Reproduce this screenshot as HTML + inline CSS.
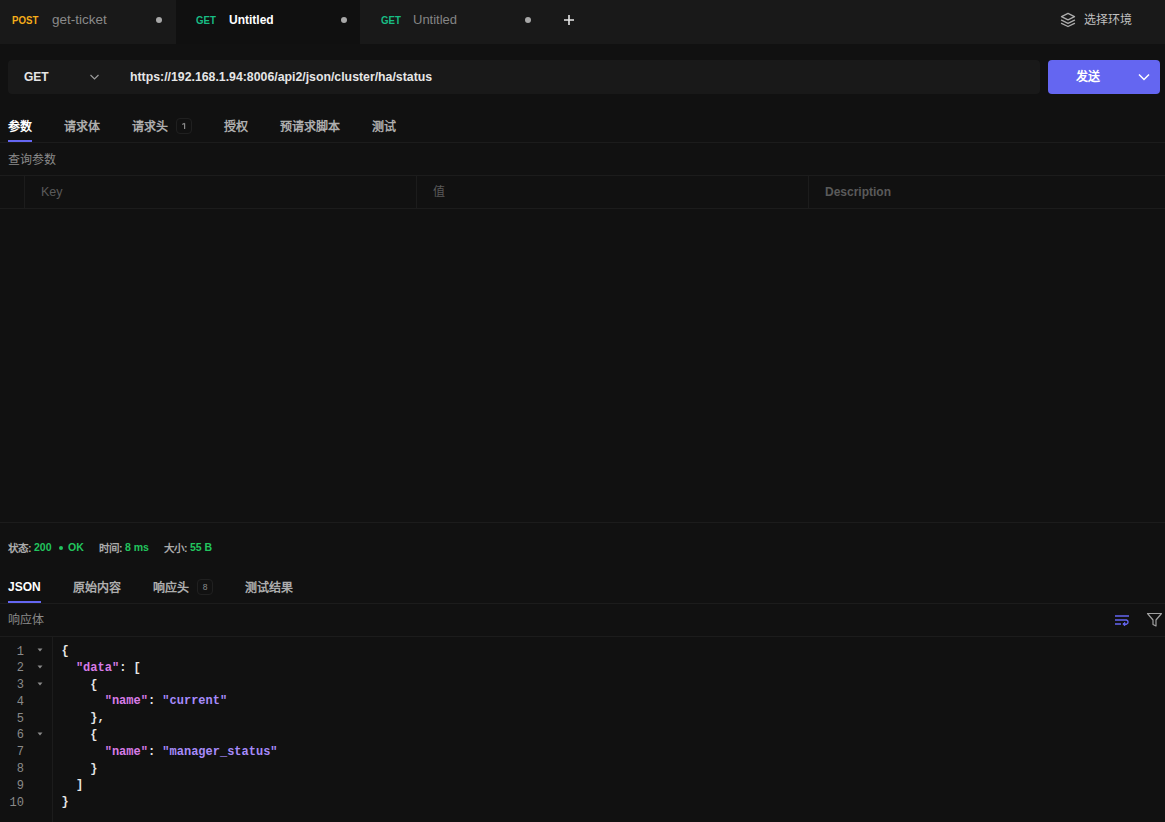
<!DOCTYPE html>
<html lang="zh-CN"><head><meta charset="utf-8">
<style>
*{margin:0;padding:0;box-sizing:border-box}
html,body{width:1165px;height:822px;overflow:hidden;background:#111111;font-family:"Liberation Sans",sans-serif;position:relative}
.a{position:absolute;white-space:nowrap}
.tabbar{left:0;top:0;width:1165px;height:44px;background:#191919}
.tab{top:0;height:44px}
.m{font-size:10.5px;font-weight:bold;top:14px;line-height:12px;transform:scaleX(0.92);transform-origin:0 0}
.tt{font-size:13px;top:11.5px;line-height:16px}
.dot{width:6px;height:6px;border-radius:50%;background:#a8a8a8;top:17px}
.hline{left:0;width:1165px;height:1px;background:#1c1c1c}
.vline{width:1px;background:#1c1c1c}
.rt{font-size:12px;font-weight:bold;color:#adadad;line-height:14px}
.badge{width:16px;height:16px;border:1px solid #202020;border-radius:4px;font-size:8.5px;color:#8a8a8a;text-align:center;line-height:14px}
.ln{font-family:"Liberation Mono",monospace;font-size:12px;color:#8a8a8a;line-height:16.8px;text-align:right;width:16px;left:8px}
.code{font-family:"Liberation Mono",monospace;font-size:12px;color:#e6e6e6;line-height:16.8px;left:61.5px;white-space:pre;font-weight:bold}
.st{top:541.5px;font-size:10.5px;line-height:13px;color:#aaaaaa;font-weight:bold}
.sv{top:540.8px;font-size:10.5px;line-height:13px;color:#22c55e;font-weight:bold}
.k{color:#d77be6}.s{color:#a78bfa}
</style></head><body>
<div class="a tabbar"></div>
<!-- tab1 -->
<div class="a tab" style="left:176px;width:184px;background:#101010"></div>
<div class="a m" style="left:12px;color:#f5ad1a">POST</div>
<div class="a tt" style="left:52px;color:#8a8a8a;font-size:13.5px">get-ticket</div>
<div class="a dot" style="left:156px"></div>
<div class="a m" style="left:196px;color:#18bd84">GET</div>
<div class="a tt" style="left:229px;color:#ffffff;font-weight:bold;font-size:12.5px;transform:scaleX(0.96);transform-origin:0 0">Untitled</div>
<div class="a dot" style="left:341px"></div>
<div class="a m" style="left:381px;color:#18bd84">GET</div>
<div class="a tt" style="left:413px;color:#858585;font-size:13px">Untitled</div>
<div class="a dot" style="left:525px"></div>
<svg class="a" style="left:563px;top:14px" width="12" height="12" viewBox="0 0 12 12"><path d="M6 1V11M1 6H11" stroke="#e6e6e6" stroke-width="1.6"/></svg>
<svg class="a" style="left:1060px;top:12px" width="17" height="17" viewBox="0 0 17 17" fill="none" stroke="#acacac" stroke-width="1.3" stroke-linejoin="round" stroke-linecap="round"><path d="M1.5 4.6L8 1.3L14.5 4.6L8 7.9Z"/><path d="M1.5 8.2L8 11.3L14.5 8.2"/><path d="M1.5 11.4L8 14.5L14.5 11.4"/></svg>
<div class="a" style="left:1084px;top:12px;font-size:12px;line-height:16px;color:#c0c0c0;font-weight:500">选择环境</div>

<!-- url row -->
<div class="a" style="left:8px;top:60px;width:1032px;height:34px;background:#191919;border-radius:4px"></div>
<div class="a" style="left:24px;top:69px;font-size:12px;font-weight:bold;color:#e6e6e6;line-height:16px">GET</div>
<svg class="a" style="left:89px;top:73px" width="11" height="8" viewBox="0 0 11 8"><path d="M1.5 2L5.5 6L9.5 2" fill="none" stroke="#9a9a9a" stroke-width="1.2"/></svg>
<div class="a" style="left:130px;top:69px;font-size:12.3px;font-weight:bold;color:#e6e6e6;line-height:16px">https://192.168.1.94:8006/api2/json/cluster/ha/status</div>
<div class="a" style="left:1048px;top:60px;width:112px;height:34px;background:#6466f1;border-radius:4px"></div>
<div class="a" style="left:1076px;top:69px;font-size:12px;font-weight:bold;color:#ffffff;line-height:16px">发送</div>
<svg class="a" style="left:1137px;top:72px" width="14" height="10" viewBox="0 0 14 10"><path d="M2 2.5L7 7.5L12 2.5" fill="none" stroke="#ffffff" stroke-width="1.5"/></svg>

<!-- request tabs -->
<div class="a rt" style="left:8px;top:119.5px;color:#ffffff">参数</div>
<div class="a" style="left:8px;top:140px;width:24px;height:2px;background:#6466f1"></div>
<div class="a rt" style="left:64px;top:119.5px">请求体</div>
<div class="a rt" style="left:132px;top:119.5px">请求头</div>
<div class="a badge" style="left:176px;top:118px"></div>
<svg class="a" style="left:180px;top:121px" width="8" height="10" viewBox="0 0 8 10"><path d="M4.6 2.2V8.1M2.3 3.6L4.6 2.2" fill="none" stroke="#8a8a8a" stroke-width="1.2"/></svg>
<div class="a rt" style="left:224px;top:119.5px">授权</div>
<div class="a rt" style="left:280px;top:119.5px">预请求脚本</div>
<div class="a rt" style="left:372px;top:119.5px">测试</div>
<div class="a hline" style="top:142px"></div>
<div class="a" style="left:8px;top:152.5px;font-size:12px;line-height:14px;color:#8a8a8a">查询参数</div>
<div class="a hline" style="top:175px"></div>
<div class="a hline" style="top:208px"></div>
<div class="a vline" style="left:24px;top:175px;height:33px"></div>
<div class="a vline" style="left:416px;top:175px;height:33px"></div>
<div class="a vline" style="left:808px;top:175px;height:33px"></div>
<div class="a" style="left:41px;top:184px;font-size:12.5px;line-height:16px;color:#5a5a5a">Key</div>
<div class="a" style="left:433px;top:183.5px;font-size:12px;line-height:16px;color:#5a5a5a">值</div>
<div class="a" style="left:825px;top:183.5px;font-size:12px;font-weight:bold;line-height:16px;color:#5a5a5a">Description</div>

<!-- response -->
<div class="a hline" style="top:522px"></div>
<div class="a st" style="left:8px">状态:</div>
<div class="a sv" style="left:34px">200</div>
<div class="a" style="left:59px;top:546px;width:4px;height:4px;border-radius:50%;background:#22c55e"></div>
<div class="a sv" style="left:68px">OK</div>
<div class="a st" style="left:99px">时间:</div>
<div class="a sv" style="left:125px">8 ms</div>
<div class="a st" style="left:164px">大小:</div>
<div class="a sv" style="left:190px">55 B</div>

<div class="a rt" style="left:8px;top:580px;color:#ffffff">JSON</div>
<div class="a" style="left:8px;top:601px;width:33px;height:2px;background:#6466f1"></div>
<div class="a rt" style="left:73px;top:580.5px">原始内容</div>
<div class="a rt" style="left:153px;top:580.5px">响应头</div>
<div class="a badge" style="left:197px;top:579px">8</div>
<div class="a rt" style="left:245px;top:580.5px">测试结果</div>
<div class="a hline" style="top:603px"></div>
<div class="a" style="left:8px;top:613px;font-size:12px;line-height:14px;color:#8a8a8a">响应体</div>
<svg class="a" style="left:1114px;top:613px" width="17" height="14" viewBox="0 0 17 14" fill="none" stroke="#6466f1" stroke-width="1.4"><path d="M1 3H15M1 7H12.5A2.2 2.2 0 0 1 12.5 11.2H10M1 11H7"/><path d="M10.8 9.4L8.8 11.1L10.8 12.8Z" fill="#6466f1" stroke-width="1"/></svg>
<svg class="a" style="left:1146px;top:612px" width="17" height="16" viewBox="0 0 17 16" fill="none" stroke="#a0a0a0" stroke-width="1.2" stroke-linejoin="round"><path d="M1.5 1.5H15.5L10 8V14L7 12.5V8Z"/></svg>
<div class="a hline" style="top:636px"></div>
<div class="a vline" style="left:52px;top:636px;height:186px"></div>
<div class="a ln" style="top:643.5px">1<br>2<br>3<br>4<br>5<br>6<br>7<br>8<br>9<br>10</div>
<svg class="a" style="left:37px;top:648.0px" width="6" height="4" viewBox="0 0 6 4"><path d="M0.5 0.5H5.5L3 3.5Z" fill="#8a8a8a"/></svg>
<svg class="a" style="left:37px;top:664.8px" width="6" height="4" viewBox="0 0 6 4"><path d="M0.5 0.5H5.5L3 3.5Z" fill="#8a8a8a"/></svg>
<svg class="a" style="left:37px;top:681.6px" width="6" height="4" viewBox="0 0 6 4"><path d="M0.5 0.5H5.5L3 3.5Z" fill="#8a8a8a"/></svg>
<svg class="a" style="left:37px;top:732.0px" width="6" height="4" viewBox="0 0 6 4"><path d="M0.5 0.5H5.5L3 3.5Z" fill="#8a8a8a"/></svg>
<div class="a code" style="top:643px">{
  <span class="k">"data"</span>: [
    {
      <span class="k">"name"</span>: <span class="s">"current"</span>
    },
    {
      <span class="k">"name"</span>: <span class="s">"manager_status"</span>
    }
  ]
}</div>
</body></html>
